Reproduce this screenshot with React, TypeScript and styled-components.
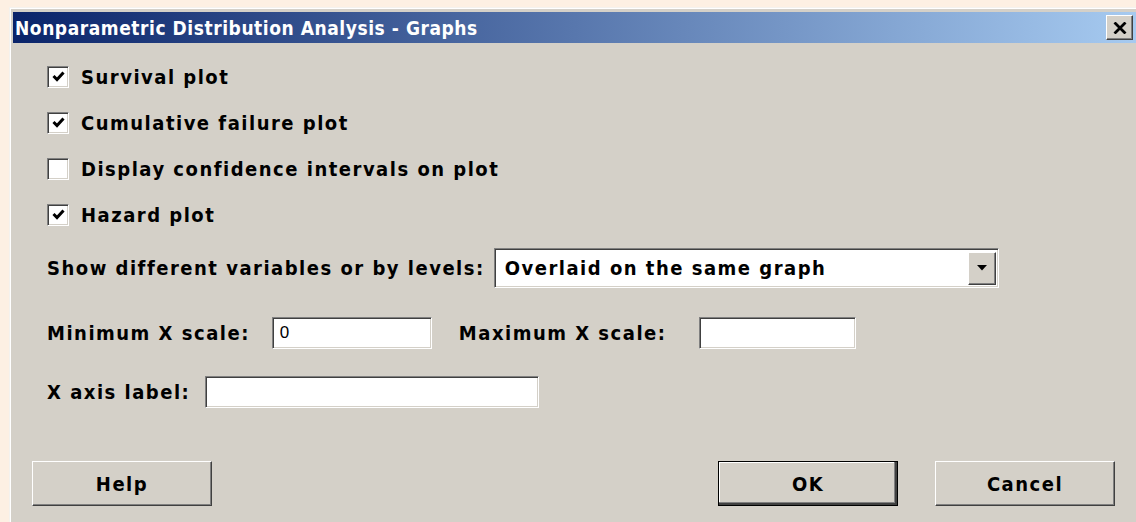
import styled, { createGlobalStyle, css } from "styled-components";

const GlobalStyle = createGlobalStyle`
  html, body {
    margin: 0;
    padding: 0;
    background: #fdf0e3;
    overflow: hidden;
  }
`;

const face = "#d4d0c8";
const uiFont = `"DejaVu Sans Condensed", "DejaVu Sans", sans-serif`;

const raised = css`
  border-top: 1px solid #ffffff;
  border-left: 1px solid #ffffff;
  border-right: 1px solid #404040;
  border-bottom: 1px solid #404040;
  box-shadow: inset -1px -1px 0 #808080, inset 1px 1px 0 ${face};
`;

const sunken = css`
  border-top: 1px solid #808080;
  border-left: 1px solid #808080;
  border-right: 1px solid #ffffff;
  border-bottom: 1px solid #ffffff;
  box-shadow: inset 1px 1px 0 #404040, inset -1px -1px 0 ${face};
`;

const Window = styled.div`
  margin: 7px 0 0 9px;
  height: 515px;
  background: ${face};
  border-top: 1px solid #f4f2ee;
  border-left: 1px solid #f4f2ee;
  box-shadow: inset 1px 1px 0 #ffffff;
  padding: 4px 0 0 3px;
  display: flex;
  flex-direction: column;
  font-family: ${uiFont};
  font-weight: bold;
  font-size: 20px;
  letter-spacing: 1.5px;
  color: #000;
`;

const TitleBar = styled.div`
  height: 31px;
  display: flex;
  align-items: center;
  justify-content: space-between;
  padding: 0 3px 0 2px;
  background: linear-gradient(to right, #0a246a, #a6caf0);
  color: #fff;
`;

const TitleText = styled.span`
  font-size: 19px;
  letter-spacing: 0.55px;
`;

const CloseButton = styled.div`
  ${raised};
  width: 25px;
  height: 23px;
  background: ${face};
  display: flex;
  align-items: center;
  justify-content: center;
`;

const Body = styled.div`
  flex: 1;
  padding: 22px 0 0 34px;
  display: flex;
  flex-direction: column;
`;

const CheckRow = styled.label`
  display: flex;
  align-items: center;
  height: 23px;
  gap: 12px;
  margin-bottom: 23px;
`;

const CheckBox = styled.span`
  ${sunken};
  box-sizing: border-box;
  width: 22px;
  height: 22px;
  background: #fff;
  display: flex;
  align-items: center;
  justify-content: center;
`;

const FieldRow = styled.div<{ $top: number }>`
  display: flex;
  align-items: center;
  margin-top: ${(p) => p.$top}px;
`;

const Label = styled.span<{ $gap?: number; $lead?: number }>`
  margin-left: ${(p) => p.$lead ?? 0}px;
  margin-right: ${(p) => p.$gap ?? 12}px;
  white-space: nowrap;
`;

const TextBox = styled.div<{ $w: number }>`
  ${sunken};
  box-sizing: border-box;
  width: ${(p) => p.$w}px;
  height: 32px;
  background: #fff;
  font-weight: normal;
  font-size: 17px;
  letter-spacing: 0;
  font-family: "Liberation Sans", sans-serif;
  display: flex;
  align-items: center;
  padding-left: 7px;
`;

const Combo = styled.div`
  ${sunken};
  box-sizing: border-box;
  width: 505px;
  height: 40px;
  background: #fff;
  display: flex;
  align-items: center;
  justify-content: space-between;
  padding: 2px 2px 2px 10px;
`;

const DropButton = styled.div`
  ${raised};
  box-sizing: border-box;
  width: 28px;
  height: 33px;
  background: ${face};
  display: flex;
  align-items: center;
  justify-content: center;
`;

const ButtonBar = styled.div`
  display: flex;
  margin-top: 53px;
  margin-left: -15px;
`;

const Button = styled.div<{ $default?: boolean; $lead?: number }>`
  ${raised};
  box-sizing: border-box;
  width: 180px;
  height: 45px;
  margin-left: ${(p) => p.$lead ?? 0}px;
  background: ${face};
  display: flex;
  align-items: center;
  justify-content: center;
  ${(p) =>
    p.$default &&
    css`
      outline: 1px solid #000;
      outline-offset: -1px;
      border-right-color: #000;
      border-bottom-color: #000;
      box-shadow: inset -2px -2px 0 #404040, inset -3px -3px 0 #808080,
        inset 1px 1px 0 #ffffff;
    `}
`;

const Tick = () => (
  <svg width="13" height="11" viewBox="0 0 13 11">
    <path d="M1.5 5 L5 8.5 L11.5 1.5" stroke="#000" strokeWidth="3" fill="none" />
  </svg>
);

const checks = [
  { label: "Survival plot", on: true },
  { label: "Cumulative failure plot", on: true },
  { label: "Display confidence intervals on plot", on: false },
  { label: "Hazard plot", on: true },
];

export default function App() {
  return (
    <>
      <GlobalStyle />
      <Window>
        <TitleBar>
          <TitleText>Nonparametric Distribution Analysis - Graphs</TitleText>
          <CloseButton>
            <svg width="14" height="12" viewBox="0 0 14 12">
              <path d="M1.5 0.5 L12.5 11.5 M12.5 0.5 L1.5 11.5" stroke="#000" strokeWidth="2.8" />
            </svg>
          </CloseButton>
        </TitleBar>
        <Body>
          {checks.map((c) => (
            <CheckRow key={c.label}>
              <CheckBox>{c.on && <Tick />}</CheckBox>
              <span>{c.label}</span>
            </CheckRow>
          ))}
          <FieldRow $top={-1}>
            <Label $gap={9}>Show different variables or by levels:</Label>
            <Combo>
              <span>Overlaid on the same graph</span>
              <DropButton>
                <svg width="10" height="6" viewBox="0 0 10 6">
                  <path d="M0 0 H10 L5 5.5 Z" fill="#000" />
                </svg>
              </DropButton>
            </Combo>
          </FieldRow>
          <FieldRow $top={29}>
            <Label $gap={22}>Minimum X scale:</Label>
            <TextBox $w={160}>0</TextBox>
            <Label $lead={27} $gap={33}>
              Maximum X scale:
            </Label>
            <TextBox $w={157} />
          </FieldRow>
          <FieldRow $top={27}>
            <Label $gap={15}>X axis label:</Label>
            <TextBox $w={334} />
          </FieldRow>
          <ButtonBar>
            <Button>Help</Button>
            <Button $default $lead={506}>
              OK
            </Button>
            <Button $lead={37}>Cancel</Button>
          </ButtonBar>
        </Body>
      </Window>
    </>
  );
}
